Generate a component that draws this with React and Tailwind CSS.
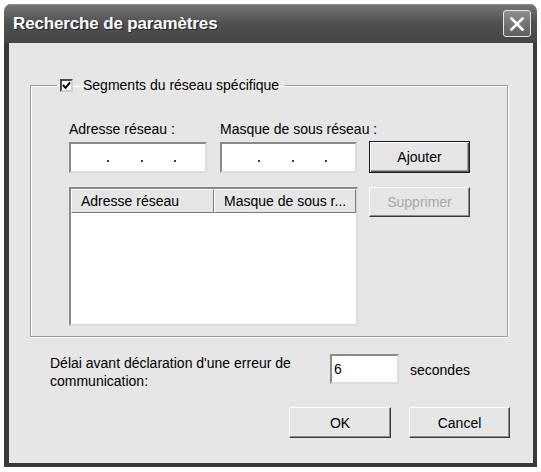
import React from "react";

// Classic raised 3D button
function PushButton({ children, className = "", disabled = false, isDefault = false }) {
  return (
    <button
      type="button"
      disabled={disabled}
      className={`flex items-center justify-center bg-[#e6e6e6] text-[14px] leading-none ${
        isDefault
          ? "border border-[#1a1a1a] shadow-[inset_1px_1px_0_#fff,inset_-1px_-1px_0_#5a5a5a,inset_-2px_-2px_0_#9a9a9a]"
          : "border border-t-white border-l-white border-r-[#3c3c3c] border-b-[#3c3c3c] shadow-[inset_-1px_-1px_0_#8c8c8c]"
      } ${disabled ? "text-[#a8a8a8]" : "text-black"} ${className}`}
    >
      {children}
    </button>
  );
}

// Sunken edit field
function Field({ className = "", children }) {
  return (
    <div
      className={`bg-white border-2 border-t-[#8a8a8a] border-l-[#8a8a8a] border-r-[#dcdcdc] border-b-[#dcdcdc] ${className}`}
    >
      {children}
    </div>
  );
}

// IP address control: four empty octets split by separator dots
function IpField({ className }) {
  const dot = <span className="block h-[2px] w-[2px] bg-[#3a3a3a]" />;
  return (
    <Field className={`flex items-center ${className}`}>
      <div className="flex w-full items-center pl-[36px] pt-[6px]">
        <span className="w-[34px]">{dot}</span>
        <span className="w-[33px]">{dot}</span>
        <span>{dot}</span>
      </div>
    </Field>
  );
}

function HeaderCell({ children, className = "" }) {
  return (
    <div
      className={`flex h-[24px] items-center whitespace-nowrap border border-t-white border-l-white border-r-[#7a7a7a] border-b-[#7a7a7a] bg-[#e6e6e6] pl-[9px] text-[14px] leading-none ${className}`}
    >
      {children}
    </div>
  );
}

export default function App() {
  return (
    <div className="w-[541px] h-[472px] bg-white pt-[4px] pl-[4px] font-['Liberation_Sans',Arial,sans-serif] text-black antialiased">
      <div className="flex h-[463px] w-[533px] flex-col overflow-hidden rounded-t-[7px]">
        {/* Title bar */}
        <div className="flex h-[39px] shrink-0 items-center justify-between bg-gradient-to-b from-[#767676] via-[#505050] to-[#454545] pl-[9px] pr-[6px] shadow-[inset_0_1px_0_#8a8a8a]">
          <span className="text-[17px] font-bold tracking-[-0.15px] text-white [text-shadow:1px_1px_0_#222]">
            Recherche de paramètres
          </span>
          <button
            type="button"
            className="flex h-[27px] w-[28px] items-center justify-center rounded-[3px] border border-[#e4e4e4] bg-gradient-to-b from-[#8e8e8e] to-[#5e5e5e]"
          >
            <svg width="16" height="16" viewBox="0 0 16 16">
              <path d="M2.5 2.5 L13.5 13.5 M13.5 2.5 L2.5 13.5" stroke="#fff" strokeWidth="2.6" strokeLinecap="square" />
            </svg>
          </button>
        </div>

        {/* Client area */}
        <div className="flex flex-1 flex-col border-l-[5px] border-r-[4px] border-b-[4px] border-[#3a3a3a] bg-[#e6e6e6]">
          <fieldset className="ml-[21px] mr-[25px] mt-[33px] border border-[#9c9c9c] pb-[10px] pl-[38px] shadow-[inset_1px_1px_0_#fff,1px_1px_0_#fff]">
            <legend className="-ml-[12px] flex h-[18px] items-center pl-[3px] pr-[6px]">
              <span className="flex h-[13px] w-[13px] items-center justify-center border-2 border-t-[#4a4a4a] border-l-[#4a4a4a] border-r-[#d0d0d0] border-b-[#d0d0d0] bg-white">
                <svg width="9" height="9" viewBox="0 0 9 9">
                  <path d="M1 4 L3.5 6.8 L8 1.5" stroke="#000" strokeWidth="2" fill="none" />
                </svg>
              </span>
              <span className="ml-[10px] whitespace-nowrap text-[14px] leading-none">Segments du réseau spécifique</span>
            </legend>

            <div className="mt-[27px] flex">
              <div className="w-[138px]">
                <div className="h-[17px] whitespace-nowrap text-[14px] leading-[17px]">Adresse réseau :</div>
                <IpField className="mt-[4px] h-[31px]" />
              </div>
              <div className="ml-[13px] w-[137px]">
                <div className="h-[17px] whitespace-nowrap text-[14px] leading-[17px]">Masque de sous réseau :</div>
                <IpField className="mt-[4px] h-[31px]" />
              </div>
              <PushButton isDefault className="ml-[12px] mt-[20px] h-[32px] w-[101px]">
                Ajouter
              </PushButton>
            </div>

            <div className="mt-[14px] flex items-start">
              <div className="flex h-[139px] w-[289px] flex-col border-2 border-t-[#8a8a8a] border-l-[#8a8a8a] border-r-[#dcdcdc] border-b-[#dcdcdc] bg-white">
                <div className="flex">
                  <HeaderCell className="w-[143px]">Adresse réseau</HeaderCell>
                  <HeaderCell className="w-[142px]">Masque de sous r...</HeaderCell>
                </div>
              </div>
              <PushButton disabled className="ml-[11px] h-[30px] w-[101px]">
                Supprimer
              </PushButton>
            </div>
          </fieldset>

          {/* Timeout row */}
          <div className="mt-[17px] flex items-start pl-[41px]">
            <p className="w-[280px] text-[14px] leading-[18px]">
              Délai avant déclaration d'une erreur de communication:
            </p>
            <Field className="flex h-[30px] w-[69px] items-center pl-[2px] text-[14px]">6</Field>
            <span className="ml-[11px] mt-[9px] text-[14px] leading-none">secondes</span>
          </div>

          {/* Dialog buttons */}
          <div className="mt-[17px] flex pl-[280px]">
            <PushButton className="h-[31px] w-[102px]">OK</PushButton>
            <PushButton className="ml-[18px] h-[31px] w-[101px]">Cancel</PushButton>
          </div>
        </div>
      </div>
    </div>
  );
}
